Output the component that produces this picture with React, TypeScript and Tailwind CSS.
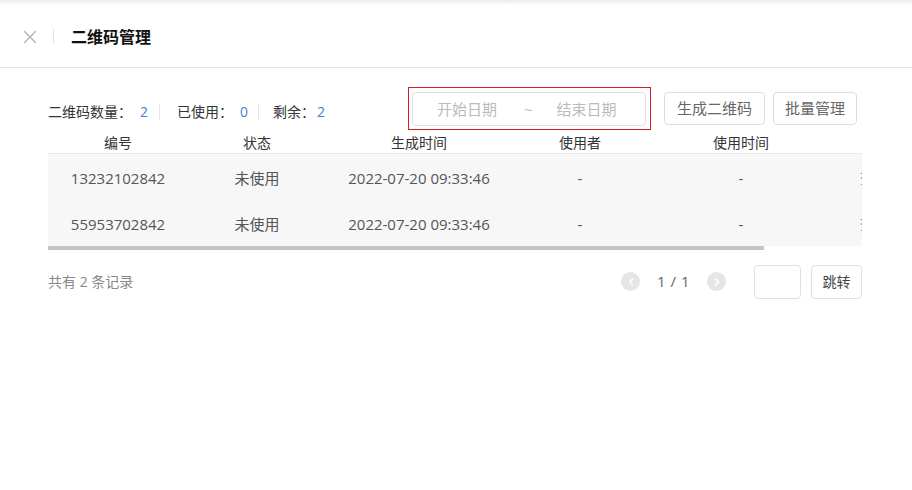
import { X, ChevronLeft, ChevronRight } from "lucide-react";

const cols = [
  { key: "no", title: "编号", w: "w-[140px]" },
  { key: "status", title: "状态", w: "w-[138px]" },
  { key: "created", title: "生成时间", w: "w-[186px]" },
  { key: "user", title: "使用者", w: "w-[136px]" },
  { key: "usedAt", title: "使用时间", w: "w-[186px]" },
];

const rows = [
  { no: "13232102842", status: "未使用", created: "2022-07-20 09:33:46", user: "-", usedAt: "-" },
  { no: "55953702842", status: "未使用", created: "2022-07-20 09:33:46", user: "-", usedAt: "-" },
];

export default function App() {
  return (
    <div
      className="w-[912px] h-[490px] bg-white overflow-hidden text-[#333]"
      style={{ fontFamily: "'Open Sans', 'Noto Sans CJK SC', sans-serif" }}
    >
      <div className="h-[6px] bg-gradient-to-b from-[#ececec] to-white" />
      {/* header */}
      <div className="h-[62px] flex items-center pl-[19px] border-b border-[#e6e6e6]">
        <X size={22} strokeWidth={1.4} className="text-[#b0b0b0]" />
        <div className="ml-[12px] w-px h-[15px] bg-[#e3e3e3]" />
        <div className="ml-[17px] text-[16px] font-bold text-[#111]">二维码管理</div>
      </div>

      <div className="px-[48px] w-[912px]">
        {/* toolbar */}
        <div className="mt-[19px] flex items-center h-[43px]">
          <div className="flex items-center text-[14px] mt-[6px]">
            <span>二维码数量：</span>
            <span className="ml-[8px] text-[#4a80d0]">2</span>
            <div className="ml-[11px] w-px h-[16px] bg-[#e6e6e6]" />
            <span className="ml-[17px]">已使用：</span>
            <span className="ml-[7px] text-[#4a80d0]">0</span>
            <div className="ml-[10px] w-px h-[16px] bg-[#e6e6e6]" />
            <span className="ml-[14px]">剩余：</span>
            <span className="ml-[2px] text-[#4a80d0]">2</span>
          </div>
          <div className="ml-auto mr-[7px] flex items-center">
            <div className="border border-[#d42020] pl-[3px] pr-[4px] pt-[4px] pb-[3px]">
              <div className="w-[234px] h-[34px] rounded-[4px] border border-[#e0e0e0] flex items-center text-[15px] text-[#bbb]">
                <span className="ml-[24px]">开始日期</span>
                <span className="ml-[27px]">~</span>
                <span className="ml-[24px]">结束日期</span>
              </div>
            </div>
            <button className="ml-[13px] w-[101px] h-[33px] rounded-[4px] border border-[#dedede] text-[15px] text-[#666]">
              生成二维码
            </button>
            <button className="ml-[8px] w-[84px] h-[33px] rounded-[4px] border border-[#dedede] text-[15px] text-[#666]">
              批量管理
            </button>
          </div>
        </div>

        {/* table */}
        <div className="w-[814px] overflow-hidden">
          <div className="w-[925px]">
            <div className="flex h-[24px] pt-[2px] items-center border-b border-[#e8e8e8] text-[14px] text-[#333]">
              {cols.map((c) => (
                <div key={c.key} className={`${c.w} text-center`}>
                  {c.title}
                </div>
              ))}
              <div className="flex-1" />
            </div>
            {rows.map((r) => (
              <div key={r.no} className="flex h-[46px] pt-[2px] items-center bg-[#f7f7f7] text-[15px] text-[#555]">
                {cols.map((c) => (
                  <div key={c.key} className={`${c.w} text-center`}>
                    {r[c.key as keyof typeof r]}
                  </div>
                ))}
                <div className="flex-1 pl-[26px] text-[#4a80d0]">查看</div>
              </div>
            ))}
          </div>
          <div className="h-[4px] w-[716px] bg-[#c4c4c4]" />
        </div>

        {/* footer */}
        <div className="mt-[15px] flex items-center h-[33px]">
          <span className="text-[14px] text-[#888]">共有 2 条记录</span>
          <div className="ml-auto mr-[2px] flex items-center">
            <div className="w-[19px] h-[19px] rounded-full bg-[#e6e6e6] flex items-center justify-center">
              <ChevronLeft size={12} strokeWidth={3} className="text-white" />
            </div>
            <span className="ml-[17px] text-[15px] text-[#666] tracking-[0.5px]">1 / 1</span>
            <div className="ml-[17px] w-[19px] h-[19px] rounded-full bg-[#e6e6e6] flex items-center justify-center">
              <ChevronRight size={12} strokeWidth={3} className="text-white" />
            </div>
            <div className="ml-[28px] w-[47px] h-[34px] rounded-[4px] border border-[#e0e0e0]" />
            <button className="ml-[10px] w-[51px] h-[34px] rounded-[4px] border border-[#e0e0e0] text-[14px] text-[#444]">
              跳转
            </button>
          </div>
        </div>
      </div>
    </div>
  );
}
